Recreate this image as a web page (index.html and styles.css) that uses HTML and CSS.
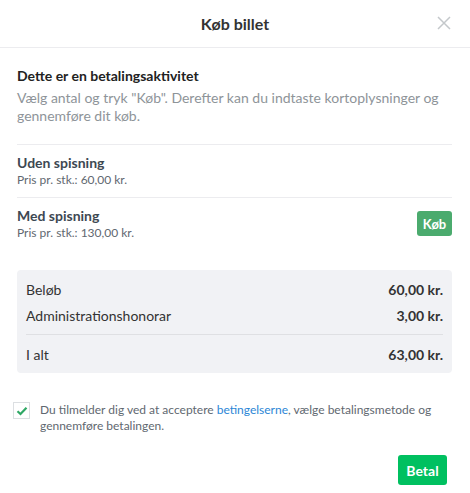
FILE: index.html
```html
<!DOCTYPE html>
<html lang="da">
<head>
<meta charset="utf-8">
<link rel="stylesheet" href="styles.css">
</head>
<body>
<div class="modal">
  <header class="modal-header">
    <h1 class="modal-title">Køb billet</h1>
    <button class="close-btn" aria-label="Luk">
      <svg width="14" height="14" viewBox="0 0 14 14"><path d="M1 1L13 13M13 1L1 13" stroke="#c4c8cb" stroke-width="1.5" fill="none"/></svg>
    </button>
  </header>
  <div class="modal-body">
    <section class="intro">
      <h2 class="intro-title">Dette er en betalingsaktivitet</h2>
      <p class="intro-text">Vælg antal og tryk "Køb". Derefter kan du indtaste kortoplysninger og gennemføre dit køb.</p>
    </section>
    <div class="item">
      <div class="item-info">
        <div class="item-name">Uden spisning</div>
        <div class="item-price">Pris pr. stk.: 60,00 kr.</div>
      </div>
    </div>
    <div class="item item-last">
      <div class="item-info">
        <div class="item-name">Med spisning</div>
        <div class="item-price">Pris pr. stk.: 130,00 kr.</div>
      </div>
      <button class="buy-btn">Køb</button>
    </div>
    <div class="summary">
      <div class="sum-row"><span>Beløb</span><span class="amt">60,00 kr.</span></div>
      <div class="sum-row"><span>Administrationshonorar</span><span class="amt">3,00 kr.</span></div>
      <div class="sum-row total"><span>I alt</span><span class="amt">63,00 kr.</span></div>
    </div>
    <div class="terms">
      <span class="checkbox">
        <svg width="12" height="10" viewBox="0 0 12 10"><path d="M1.5 5.2L4.5 8L10.5 1.8" stroke="#2fa865" stroke-width="2.2" fill="none"/></svg>
      </span>
      <p class="terms-text">Du tilmelder dig ved at acceptere <a class="link">betingelserne</a>, vælge betalingsmetode og gennemføre betalingen.</p>
    </div>
    <div class="actions">
      <button class="pay-btn">Betal</button>
    </div>
  </div>
</div>
</body>
</html>
```

FILE: styles.css
```css
* { box-sizing: border-box; }
html, body { margin: 0; padding: 0; background: #fff; }
body {
  font-family: Lato, "Open Sans", sans-serif;
  color: #3a4450;
  width: 470px;
}
.modal { width: 470px; }
.modal-header {
  height: 48px;
  border-bottom: 1px solid #ececef;
  display: flex;
  align-items: center;
  justify-content: center;
  position: relative;
}
.modal-title {
  margin: 0;
  font-size: 16px;
  font-weight: 700;
  color: #333;
}
.close-btn {
  position: absolute;
  right: 19px;
  top: 16px;
  border: 0;
  background: none;
  padding: 0;
  width: 14px;
  height: 14px;
  display: block;
}
.close-btn svg { display: block; }
.modal-body { padding: 0 18px 0 17px; }
.intro {
  padding: 19px 0 19px;
  border-bottom: 1px solid #ececef;
}
.intro-title {
  margin: 0 0 4px;
  font-size: 14px;
  font-weight: 700;
  color: #222;
  line-height: 18px;
}
.intro-text {
  margin: 0;
  font-size: 14px;
  line-height: 18px;
  color: #8e9499;
}
.item {
  display: flex;
  align-items: center;
  justify-content: space-between;
  padding: 9px 0 10px;
  border-bottom: 1px solid #ececef;
}
.item-last { border-bottom: 0; }
.item-name {
  font-size: 14px;
  font-weight: 700;
  color: #3d4852;
  line-height: 18px;
}
.item-price {
  font-size: 12px;
  color: #5f6870;
  line-height: 15px;
}
.buy-btn {
  font-family: inherit;
  background: #4bab6e;
  color: #fff;
  border: 0;
  border-radius: 3px;
  font-size: 13px;
  font-weight: 700;
  height: 25px;
  width: 35px;
  padding: 0;
}
.summary {
  margin-top: 20px;
  background: #f1f2f5;
  border-radius: 4px;
  padding: 7px 9px 5px 9px;
}
.sum-row {
  display: flex;
  justify-content: space-between;
  font-size: 14px;
  line-height: 18px;
  color: #333;
  padding: 4px 0;
}
.sum-row .amt { font-weight: 700; }
.sum-row.total {
  border-top: 1px solid #dfe0e3;
  margin-top: 5px;
  padding-top: 11px;
}
.terms {
  display: flex;
  align-items: flex-start;
  margin: 29px 0 0 -4px;
  gap: 10px;
}
.checkbox {
  width: 17px;
  height: 17px;
  border: 1px solid #dcdfe2;
  background: #fff;
  display: flex;
  align-items: center;
  justify-content: center;
  flex: none;
}
.terms-text {
  margin: 0;
  font-size: 12px;
  line-height: 16px;
  color: #5f6870;
}
.link { color: #2b86d6; text-decoration: none; }
.actions {
  display: flex;
  justify-content: flex-end;
  margin-top: 21px;
  padding-right: 5px;
}
.pay-btn {
  font-family: inherit;
  background: #00c060;
  color: #fff;
  border: 0;
  border-radius: 3px;
  font-size: 14px;
  font-weight: 700;
  height: 30px;
  width: 49px;
  padding: 0;
}
```
